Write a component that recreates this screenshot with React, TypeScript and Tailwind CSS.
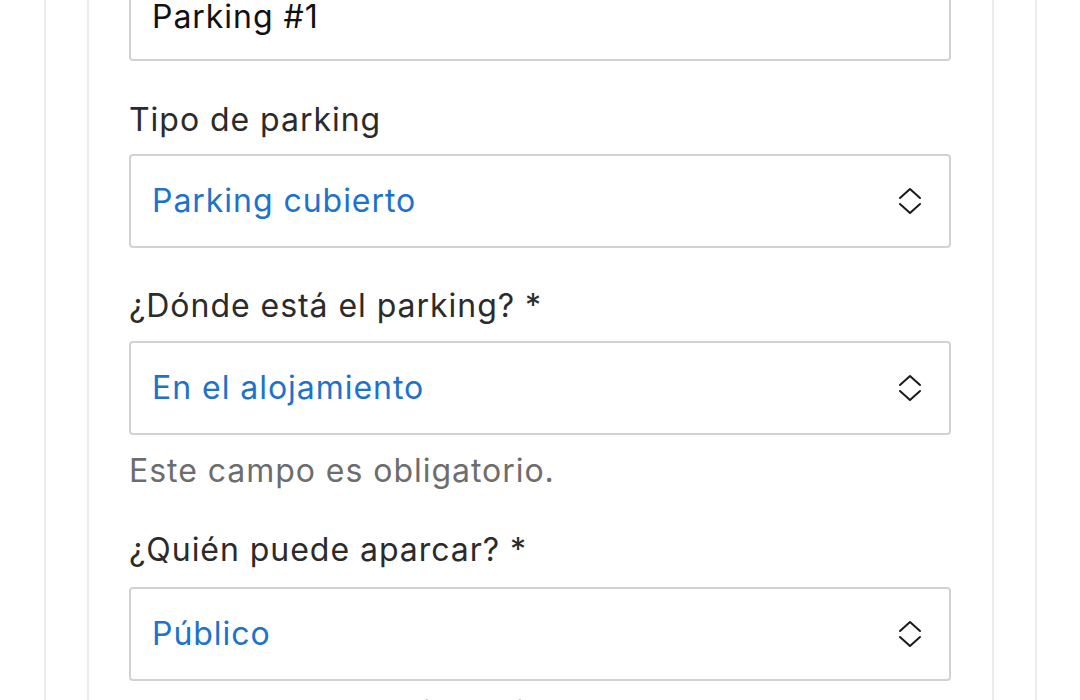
const font = { fontFamily: 'Inter, "Noto Sans", sans-serif' }

const Chevrons = () => (
  <svg width="24" height="28" viewBox="0 0 24 28" fill="none" stroke="#1a1a1a" strokeWidth="2" strokeLinecap="round" strokeLinejoin="round">
    <path d="M2 11 L12 2 L22 11" />
    <path d="M2 17 L12 26 L22 17" />
  </svg>
)

type SelectBoxProps = {
  value: string
}

const SelectBox = ({ value }: SelectBoxProps) => (
  <div className="flex h-[94px] items-center justify-between rounded-[4px] border-2 border-[#d2d2d2] bg-white pl-[21px] pr-[27px]">
    <span className="text-[32px] leading-[36px] tracking-[0.03em] text-[#1d72cc]">{value}</span>
    <Chevrons />
  </div>
)

const Label = ({ children, className }: { children: React.ReactNode; className?: string }) => (
  <div className={`text-[32px] leading-[36px] tracking-[0.03em] text-[#2b2b2b] ${className ?? ''}`}>{children}</div>
)

const Helper = ({ className }: { className?: string }) => (
  <div className={`text-[32px] leading-[36px] tracking-[0.03em] text-[#6d6d6d] ${className ?? ''}`}>
    Este campo es obligatorio.
  </div>
)

export default function App() {
  return (
    <div className="flex h-[700px] w-full overflow-hidden bg-white" style={font}>
      <div className="ml-[44px] flex h-full w-[993px] border-x-2 border-[#ececec]">
        <div className="ml-[41px] flex h-full w-[907px] flex-col border-x-2 border-[#ececec]">
          <div className="-mt-[33px] pl-[40px] pr-[41px]">
            <div className="flex h-[94px] items-center rounded-[4px] border-2 border-[#d2d2d2] bg-white pl-[21px] pt-[5px]">
              <span className="text-[32px] leading-[36px] tracking-[0.03em] text-[#111111]">Parking #1</span>
            </div>

            <Label className="mt-[41px]">Tipo de parking</Label>
            <div className="mt-[16px]">
              <SelectBox value="Parking cubierto" />
            </div>

            <Label className="mt-[40px]">¿Dónde está el parking? *</Label>
            <div className="mt-[17px]">
              <SelectBox value="En el alojamiento" />
            </div>
            <Helper className="mt-[18px]" />

            <Label className="mt-[43px]">¿Quién puede aparcar? *</Label>
            <div className="mt-[19px]">
              <SelectBox value="Público" />
            </div>
            <Helper className="mt-[14px]" />
          </div>
        </div>
      </div>
    </div>
  )
}
